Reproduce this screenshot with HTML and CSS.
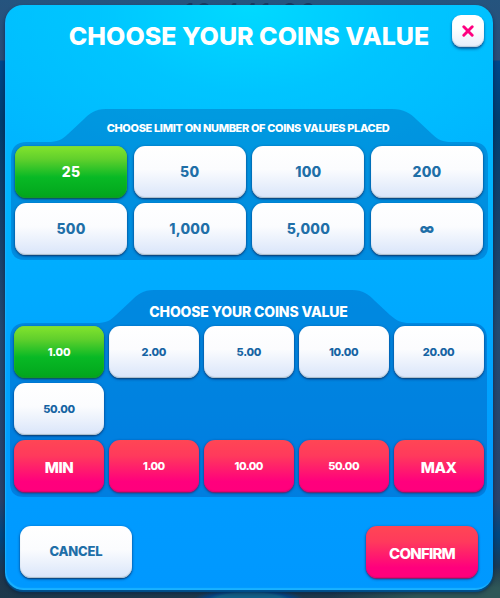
FILE: index.html
```
<!DOCTYPE html>
<html lang="en">
<head>
    <meta charset="UTF-8">
    <meta name="viewport" content="width=device-width, initial-scale=1.0">
    <title>Choose your coins value</title>
    <link rel="stylesheet" href="styles.css">
</head>
<body>
    <div class="balance">12,441.26</div>
    <div class="modal">
        <h1>CHOOSE YOUR COINS VALUE</h1>
        <button class="close" aria-label="Close">
            <svg width="12" height="12" viewBox="0 0 12 12">
                <path d="M1.8 1.8L10.2 10.2M10.2 1.8L1.8 10.2" fill="none" stroke="#ff0080" stroke-width="2.9" stroke-linecap="round"/>
            </svg>
        </button>

        <div class="panel panel-limit">
            <svg class="shape" width="477" height="151" viewBox="0 0 477 151">
                <path d="M0 49Q0 33 16 33H37C46 33 51 31 57 25L72 11C79 4 84 0 95 0H381C393 0 399 4 406 11L421 25C427 31 432 33 440 33H461Q477 33 477 49V137Q477 151 463 151H14Q0 151 0 137Z"/>
            </svg>
            <h2>CHOOSE LIMIT ON NUMBER OF COINS VALUES PLACED</h2>
            <div class="grid">
                <button class="btn active">25</button>
                <button class="btn">50</button>
                <button class="btn">100</button>
                <button class="btn">200</button>
                <button class="btn">500</button>
                <button class="btn">1,000</button>
                <button class="btn">5,000</button>
                <button class="btn infinity">∞</button>
            </div>
        </div>

        <div class="panel panel-value">
            <svg class="shape" width="477" height="207" viewBox="0 0 477 207">
                <path d="M0 49Q0 33 16 33H86C96 33 100 31 106 25L121 11C128 4 133 0 144 0H342C353 0 358 4 365 11L380 25C387 31 391 33 400 33H461Q477 33 477 49V193Q477 207 463 207H14Q0 207 0 193Z"/>
            </svg>
            <h2>CHOOSE YOUR COINS VALUE</h2>
            <div class="grid">
                <button class="btn active">1.00</button>
                <button class="btn">2.00</button>
                <button class="btn">5.00</button>
                <button class="btn">10.00</button>
                <button class="btn">20.00</button>
                <button class="btn">50.00</button>
            </div>
            <div class="grid">
                <button class="btn red big">MIN</button>
                <button class="btn red">1.00</button>
                <button class="btn red">10.00</button>
                <button class="btn red">50.00</button>
                <button class="btn red big">MAX</button>
            </div>
        </div>

        <div class="footer">
            <button class="btn cancel">CANCEL</button>
            <button class="btn red confirm">CONFIRM</button>
        </div>
    </div>
</body>
</html>
```
FILE: styles.css
```
* {
    box-sizing: border-box;
}
body {
    margin: 0;
    padding: 5px 7px 8px 5px;
    height: 598px;
    overflow: hidden;
    position: relative;
    font-family: Inter, sans-serif;
    background:
        radial-gradient(ellipse 56px 12px at 249px 600px, #136089 60%, #064584 75%, rgba(6, 69, 132, 0) 100%),
        radial-gradient(ellipse 140px 34px at 470px 600px, #2f5758 40%, rgba(47, 87, 88, 0) 100%),
        linear-gradient(#25547e 0, #2c4d78 60px, #00468a 61px, #003e70 120px, #17406a 220px, #244a70 330px, #2a426b 500px, #004680 535px, #20374d 575px, #1d394c 598px);
}
.balance {
    position: absolute;
    top: 0;
    left: 0;
    width: 502px;
    text-align: center;
    font-size: 24px;
    line-height: 26px;
    letter-spacing: 2.6px;
    font-weight: 500;
    color: #18395f;
}
.modal {
    position: relative;
    height: 585px;
    border-radius: 18px;
    background: radial-gradient(ellipse 330px 190px at 50% 0, #00daff 0, rgba(0, 205, 255, 0.6) 45%, rgba(0, 190, 255, 0) 100%), linear-gradient(#00bcff 0, #00b2ff 35%, #009dff 75%, #0098ff 100%);
    box-shadow: inset 1px -2px 1px #19b2ff, 0 2px 1px #00508f, 0 3px 4px rgba(0, 20, 50, 0.6);
}
h1 {
    margin: 0;
    padding-top: 15px;
    height: 104px;
    font-size: 25px;
    line-height: 32px;
    font-weight: 800;
    text-align: center;
    color: #fff;
    white-space: nowrap;
}
button {
    font-family: inherit;
    padding: 0;
    border: none;
    cursor: pointer;
}
.close {
    position: absolute;
    top: 10px;
    right: 9px;
    width: 32px;
    height: 32px;
    border-radius: 9px;
    display: flex;
    align-items: center;
    justify-content: center;
    padding: 0 0 1px;
    background: linear-gradient(#fff 40%, #e6edfa);
    box-shadow: inset 0 -1px 1px #b8cadb, 0 1px 1px #17639c, 0 2px 3px rgba(0, 50, 120, 0.7);
}
.panel {
    position: relative;
    width: 477px;
}
.shape {
    position: absolute;
    top: 0;
    left: 0;
    fill: rgba(0, 40, 130, 0.25);
}
.panel-limit {
    margin-left: 6px;
    height: 151px;
}
.panel-value {
    margin: 30px 0 0 5px;
    height: 207px;
}
h2 {
    position: relative;
    margin: 0;
    color: #fff;
    text-align: center;
    white-space: nowrap;
    font-weight: 800;
}
.panel-limit h2 {
    height: 37px;
    padding: 11px 3px 0 0;
    font-size: 11px;
    line-height: 16px;
    letter-spacing: -0.35px;
}
.panel-value h2 {
    height: 36px;
    padding-top: 13px;
    font-size: 14px;
    line-height: 18px;
    letter-spacing: -0.15px;
}
.grid {
    position: relative;
    display: grid;
}
.panel-limit .grid {
    grid-template-columns: repeat(4, 112px);
    column-gap: 6.7px;
    row-gap: 5px;
    padding-left: 4px;
}
.panel-value .grid {
    grid-template-columns: repeat(5, 90px);
    column-gap: 4.9px;
    row-gap: 5px;
    padding-left: 4px;
    margin-bottom: 5px;
}
.btn {
    height: 52px;
    border-radius: 11px;
    padding-bottom: 2px;
    font-size: 14px;
    letter-spacing: 0.2px;
    font-weight: 800;
    color: #1f6fa8;
    background: linear-gradient(#fff 0, #fbfcfe 45%, #dce7fa 95%);
    box-shadow: inset 0 -1px 1px #a9bcc9, 0 1px 1px #0d4a83, 0 1px 3px rgba(0, 35, 100, 0.75);
}
.infinity {
    font-weight: 900;
}
.panel-value .btn {
    padding-bottom: 0;
    font-size: 11px;
    letter-spacing: -0.3px;
    color: #1664a3;
}
.btn.active,
.panel-value .btn.active {
    color: #fff;
    background: linear-gradient(#83e42d 0, #61d02c 25%, #08b925 60%, #02a51c 100%);
    box-shadow: inset 0 1px 1px #78d93c, inset 0 -1px 1px #14972d, 0 1px 1px #075c67, 0 1px 3px rgba(0, 35, 100, 0.75);
}
.btn.red,
.panel-value .btn.red {
    color: #fff;
    letter-spacing: -0.5px;
    background: linear-gradient(#ff4654 0, #ff3a5c 30%, #ff007d 80%, #ff007c 100%);
    box-shadow: inset 0 -1px 1px #e4006e, 0 1px 1px #79266f, 0 1px 3px rgba(0, 35, 100, 0.8);
}
.panel-value .btn.big {
    font-size: 15px;
    padding-top: 2px;
}
.footer {
    display: flex;
    justify-content: space-between;
    padding: 29px 15px 0;
}
.footer .btn {
    width: 112px;
}
.footer .cancel {
    font-size: 13px;
    letter-spacing: -0.2px;
}
.footer .confirm {
    font-size: 15px;
    padding: 2px 0 0;
    letter-spacing: -0.8px;
}
```
